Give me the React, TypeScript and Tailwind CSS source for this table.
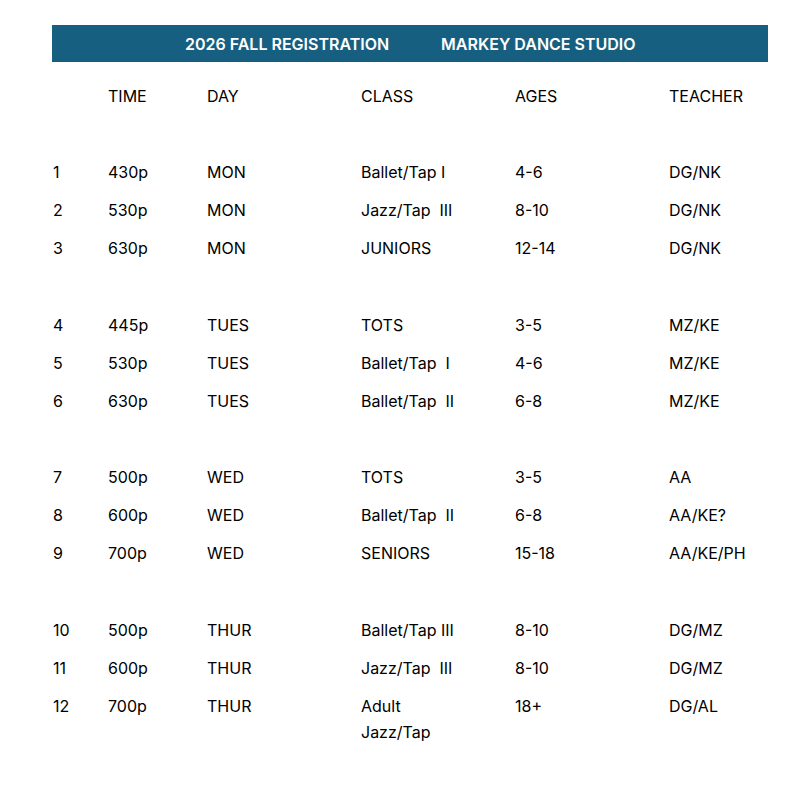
import React from 'react';

type Row = { n: number; time: string; day: string; cls: string[]; ages: string; teacher: string } | null;

const rows: Row[] = [
    { n: 1, time: '430p', day: 'MON', cls: ['Ballet/Tap I'], ages: '4-6', teacher: 'DG/NK' },
    { n: 2, time: '530p', day: 'MON', cls: ['Jazz/Tap\u00a0 III'], ages: '8-10', teacher: 'DG/NK' },
    { n: 3, time: '630p', day: 'MON', cls: ['JUNIORS'], ages: '12-14', teacher: 'DG/NK' },
    null,
    { n: 4, time: '445p', day: 'TUES', cls: ['TOTS'], ages: '3-5', teacher: 'MZ/KE' },
    { n: 5, time: '530p', day: 'TUES', cls: ['Ballet/Tap\u00a0 I'], ages: '4-6', teacher: 'MZ/KE' },
    { n: 6, time: '630p', day: 'TUES', cls: ['Ballet/Tap\u00a0 II'], ages: '6-8', teacher: 'MZ/KE' },
    null,
    { n: 7, time: '500p', day: 'WED', cls: ['TOTS'], ages: '3-5', teacher: 'AA' },
    { n: 8, time: '600p', day: 'WED', cls: ['Ballet/Tap\u00a0 II'], ages: '6-8', teacher: 'AA/KE?' },
    { n: 9, time: '700p', day: 'WED', cls: ['SENIORS'], ages: '15-18', teacher: 'AA/KE/PH' },
    null,
    { n: 10, time: '500p', day: 'THUR', cls: ['Ballet/Tap III'], ages: '8-10', teacher: 'DG/MZ' },
    { n: 11, time: '600p', day: 'THUR', cls: ['Jazz/Tap\u00a0 III'], ages: '8-10', teacher: 'DG/MZ' },
    { n: 12, time: '700p', day: 'THUR', cls: ['Adult', 'Jazz/Tap'], ages: '18+', teacher: 'DG/AL' },
];

const grid = 'grid grid-cols-[55px_99px_154px_154px_154px_100px]';

export default function App() {
    return (
        <div className="min-h-[792px] w-[791px] bg-white pt-[25px] pl-[52px] text-[16px] text-black" style={{ fontFamily: 'Inter, "Liberation Sans", sans-serif' }}>
            {/* title bar */}
            <div className="flex h-[37px] w-[716px] items-center bg-[#175f80] font-semibold text-white">
                <span className="ml-[133px]">2026 FALL REGISTRATION</span>
                <span className="ml-[52px]">MARKEY DANCE STUDIO</span>
            </div>

            <div className="mt-[15px] w-[716px]">
                <div className={`${grid} h-[38px] items-center pl-[1px] leading-[26px]`}>
                    <div />
                    <div>TIME</div>
                    <div>DAY</div>
                    <div>CLASS</div>
                    <div>AGES</div>
                    <div>TEACHER</div>
                </div>
                <div className="h-[38px]" />

                {rows.map((r, i) =>
                    r ? (
                        <div key={i} className={`${grid} py-[6px] pl-[1px] leading-[26px]`}>
                            <div>{r.n}</div>
                            <div>{r.time}</div>
                            <div>{r.day}</div>
                            <div>
                                {r.cls.map((c) => (
                                    <div key={c} className="whitespace-pre">{c}</div>
                                ))}
                            </div>
                            <div>{r.ages}</div>
                            <div>{r.teacher}</div>
                        </div>
                    ) : (
                        <div key={i} className="h-[38.5px]" />
                    )
                )}
            </div>
        </div>
    );
}
